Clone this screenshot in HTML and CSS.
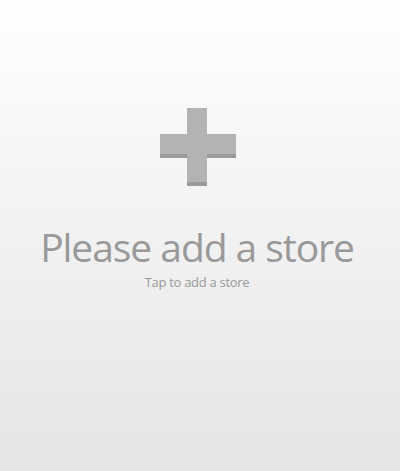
FILE: index.html
```html
<!DOCTYPE html>
<html>
<head>
<meta charset="utf-8">
<link rel="stylesheet" href="styles.css">
</head>
<body>
<main class="empty">
  <svg class="plus" width="76" height="80" viewBox="0 0 76 80">
    <g fill="#9a9a9a">
      <rect x="27" y="4" width="20" height="75"/>
      <rect x="0" y="31" width="76" height="20"/>
    </g>
    <g fill="#b3b3b3">
      <rect x="27" y="1" width="20" height="74"/>
      <rect x="0" y="27" width="76" height="20"/>
    </g>
  </svg>
  <h1 class="title">Please add a store</h1>
  <p class="subtitle">Tap to add a store</p>
</main>
</body>
</html>
```

FILE: styles.css
```css
html, body {
  margin: 0;
  padding: 0;
  height: 100%;
}
body {
  background: linear-gradient(to bottom, #ffffff 0%, #f4f4f4 40%, #e5e5e5 100%);
  font-family: "Open Sans", "Liberation Sans", sans-serif;
}
.empty {
  display: flex;
  flex-direction: column;
  align-items: center;
  padding-top: 107px;
}
.plus {
  display: block;
  margin-left: -4px;
}
.title {
  margin: 38px 0 0;
  padding-right: 6px;
  font-size: 39px;
  font-weight: 400;
  line-height: 44px;
  color: #999999;
  letter-spacing: -1.05px;
}
.subtitle {
  margin: 4px 0 0;
  padding-right: 6px;
  font-size: 13px;
  line-height: 18px;
  color: #999999;
  letter-spacing: -0.3px;
}
```
